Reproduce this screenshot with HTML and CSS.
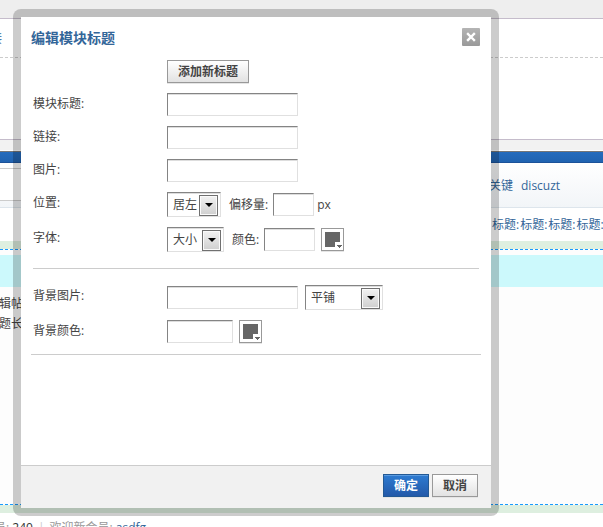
FILE: index.html
```html
<!DOCTYPE html>
<html lang="zh-CN">
<head>
<meta charset="utf-8">
<title>编辑模块标题</title>
<link rel="stylesheet" href="styles.css">
</head>
<body>
<div class="page">
  <div class="topbar"></div>
  <div class="header">
    <div class="header-links"><a href="#">链接</a></div>
  </div>
  <div class="strip"></div>
  <div class="nav"></div>
  <div class="search">
    <div class="search-box"></div>
    <div class="search-links"><a href="#">关键</a><a href="#">discuzt</a></div>
  </div>
  <div class="crumbs"><a href="#">标题:</a><a href="#">标题:</a><a href="#">标题:</a><a href="#">标题:</a></div>
  <div class="drop-bar"></div>
  <div class="frame">
    <div class="block-title"></div>
    <ul class="block-list">
      <li>编辑帖</li>
      <li>标题长</li>
    </ul>
  </div>
  <div class="drop-bar"></div>
  <div class="stats">会员: <b>240</b><i>|</i>欢迎新会员: <a href="#">asdfg</a></div>
</div>

<form class="dialog" role="dialog" aria-labelledby="dialog-title">
  <div class="panel">
    <div class="head">
      <h1 id="dialog-title">编辑模块标题</h1>
      <button type="button" class="close" aria-label="关闭">
        <svg width="18" height="18" viewBox="0 0 18 18"><path d="M6 6l6 6M12 6l-6 6" stroke="#fff" stroke-width="2.4" stroke-linecap="square" fill="none"/></svg>
      </button>
    </div>
    <div class="body">
      <div class="rows">
        <div class="row"><span class="label"></span><button type="button" class="btn">添加新标题</button></div>
        <div class="row"><label class="label" for="title">模块标题:</label><input class="text wide" id="title"></div>
        <div class="row"><label class="label" for="link">链接:</label><input class="text wide" id="link"></div>
        <div class="row"><label class="label" for="pic">图片:</label><input class="text wide" id="pic"></div>
        <div class="row">
          <label class="label" for="pos">位置:</label>
          <div class="controls">
            <span class="select pos"><select id="pos"><option>居左</option><option>居右</option></select></span>
            <label class="inline" for="offset">偏移量:</label><input class="text offset" id="offset"><span class="unit">px</span>
          </div>
        </div>
        <div class="row">
          <label class="label" for="size">字体:</label>
          <div class="controls">
            <span class="select size"><select id="size"><option>大小</option></select></span>
            <label class="inline" for="color">颜色:</label><input class="text color" id="color">
            <button type="button" class="picker" aria-label="选择颜色"><svg width="21" height="21" viewBox="0 0 21 21"><path d="M3 3h15v10h-5v5H3z" fill="#666"/><path d="M15 16h5v1h-1v1h-1v1h-1v-1h-1v-1h-1z" fill="#666"/></svg></button>
          </div>
        </div>
      </div>
      <div class="rows background">
        <div class="row">
          <label class="label" for="bgpic">背景图片:</label>
          <div class="controls">
            <input class="text wide" id="bgpic">
            <span class="select repeat"><select aria-label="平铺方式"><option>平铺</option><option>不平铺</option></select></span>
          </div>
        </div>
        <div class="row">
          <label class="label" for="bgcolor">背景颜色:</label>
          <div class="controls">
            <input class="text bgcolor" id="bgcolor">
            <button type="button" class="picker" aria-label="选择背景颜色"><svg width="21" height="21" viewBox="0 0 21 21"><path d="M3 3h15v10h-5v5H3z" fill="#666"/><path d="M15 16h5v1h-1v1h-1v1h-1v-1h-1v-1h-1z" fill="#666"/></svg></button>
          </div>
        </div>
      </div>
    </div>
    <div class="foot">
      <button type="submit" class="btn primary">确定</button>
      <button type="button" class="btn">取消</button>
    </div>
  </div>
</form>
</body>
</html>
```
FILE: styles.css
```css
* { box-sizing: border-box; }

html, body { height: 100%; }

body {
  margin: 0;
  overflow: hidden;
  background: #fff;
  color: #444;
  font: 12px/20px "Open Sans", "Noto Sans CJK SC", sans-serif;
}

button, input, select { font: inherit; color: inherit; margin: 0; }
a { color: #369; text-decoration: none; }

/* Page behind the dialog */
.page { white-space: nowrap; overflow: hidden; height: 100%; }
.topbar { height: 18px; background: #eee; }
.header {
  height: 122px;
  border-top: 1px solid #c5bccb;
  border-bottom: 1px solid #c5bccb;
}
.header-links {
  height: 39px;
  padding-top: 10px;
  border-bottom: 1px dashed #ccc;
  text-indent: -22px;
}
.strip { height: 11px; border-bottom: 1px solid #fff; background: #f2f2f2; }
.nav {
  height: 12px;
  border-top: 1px solid #777;
  border-bottom: 1px solid #1c5299;
  background: linear-gradient(#266cbd, #2163b0);
}
.search {
  display: flex;
  height: 45px;
  border-bottom: 1px solid #dde5ec;
  background: linear-gradient(#fff, #f2f5f8);
}
.search-box {
  width: 100px;
  height: 33px;
  margin-top: 5px;
  border: solid #ccc;
  border-width: 1px 0;
  background: #fff;
}
.search-links { display: flex; gap: 8px; padding: 13px 0 0 389px; }
.crumbs { display: flex; gap: 1px; height: 33px; padding: 7px 0 0 492px; }
.drop-bar { height: 8px; background: #deefe0; }
.frame {
  height: 256px;
  padding-top: 5px;
  border: dashed #1a9bfc;
  border-width: 1px 0;
  background: #fdfdfd;
}
.block-title { height: 32px; background: #ccf9fc; }
.block-list { margin: 0; padding: 7px 0 0; list-style: none; text-indent: -13px; }
.stats { padding-top: 5px; color: #999; text-indent: -18px; }
.stats b { font-weight: normal; color: #333; }
.stats i { margin: 0 5px; font-style: normal; color: #ccc; }

/* Dialog */
.dialog {
  position: absolute;
  top: 9px;
  left: 13px;
  right: 104px;
  margin: 0;
  padding: 8px;
  border-radius: 8px;
  background: rgba(0, 0, 0, 0.2);
}
.panel { background: #fff; }
.head {
  display: flex;
  justify-content: space-between;
  align-items: flex-start;
  padding: 11px 11px 0 10px;
}
h1 { margin: 0; font-size: 14px; line-height: 20px; color: #369; }
.close {
  width: 18px;
  height: 18px;
  padding: 0;
  border: 0;
  border-radius: 1px;
  background: linear-gradient(#b4b4b4, #999);
}
.close svg, .picker svg { display: block; }
.body {
  min-height: 417px;
  padding: 12px 10px 0;
}
.rows {
  display: flex;
  flex-direction: column;
  gap: 10px;
  margin: 0 2px;
  padding-bottom: 16px;
  border-bottom: 1px solid #ccc;
}
.background {
  margin: 0;
  padding: 16px 2px 11px;
}
.row { display: flex; align-items: flex-start; }
.label { width: 134px; flex: none; line-height: 22px; }
.controls { display: flex; align-items: center; }

.btn {
  height: 23px;
  padding: 0 10px;
  border: 1px solid #999;
  background: linear-gradient(#fff, #e2e2e2);
  box-shadow: 0 1px 0 #e5e5e5;
  font-weight: bold;
  line-height: 20px;
}
.text {
  height: 23px;
  padding: 2px;
  border: 1px solid;
  border-color: #848484 #e0e0e0 #e0e0e0 #848484;
  border-radius: 0;
  background: #fff;
  box-shadow: inset 0 1px 0 #ddd;
}
.wide { width: 131px; }
.offset { width: 41px; }
.color { width: 51px; }
.bgcolor { width: 66px; }
.inline { margin: 0 5px 0 8px; }
.unit { margin-left: 3px; }

.select {
  position: relative;
  display: block;
  height: 25px;
  border: 1px solid;
  border-color: #848484 #e0e0e0 #e0e0e0 #848484;
  box-shadow: inset 0 1px 0 #ddd;
}
.select select {
  display: block;
  width: 100%;
  height: 23px;
  padding: 0 0 0 5px;
  border: 0;
  background: none;
  appearance: none;
}
.select::before {
  content: "";
  position: absolute;
  top: 2px;
  right: 2px;
  width: 17px;
  height: 19px;
  border: 1px solid #707070;
  background: linear-gradient(#f2f2f2, #cfcfcf);
  box-shadow: inset 0 0 0 1px #fafafa;
  pointer-events: none;
}
.select::after {
  content: "";
  position: absolute;
  top: 10px;
  right: 7px;
  border: solid transparent;
  border-width: 4px 4px 0;
  border-top-color: #000;
  pointer-events: none;
}
.pos { width: 54px; }
.size { width: 57px; }
.repeat { width: 78px; margin-left: 7px; }

.picker {
  width: 23px;
  height: 23px;
  margin-left: 6px;
  padding: 0;
  border: 1px solid #999;
  background: #fff;
  box-shadow: 0 1px 0 #e5e5e5;
}

.foot {
  display: flex;
  justify-content: flex-end;
  gap: 3px;
  padding: 8px 13px 11px;
  border-top: 1px solid #ccc;
  background: #f1f1f1;
}
.primary {
  border-color: #235994;
  background: linear-gradient(#2d7bd1, #2359a9);
  box-shadow: inset 0 1px 0 #5b9be0, 0 1px 0 #e5e5e5;
  color: #fff;
}
```
